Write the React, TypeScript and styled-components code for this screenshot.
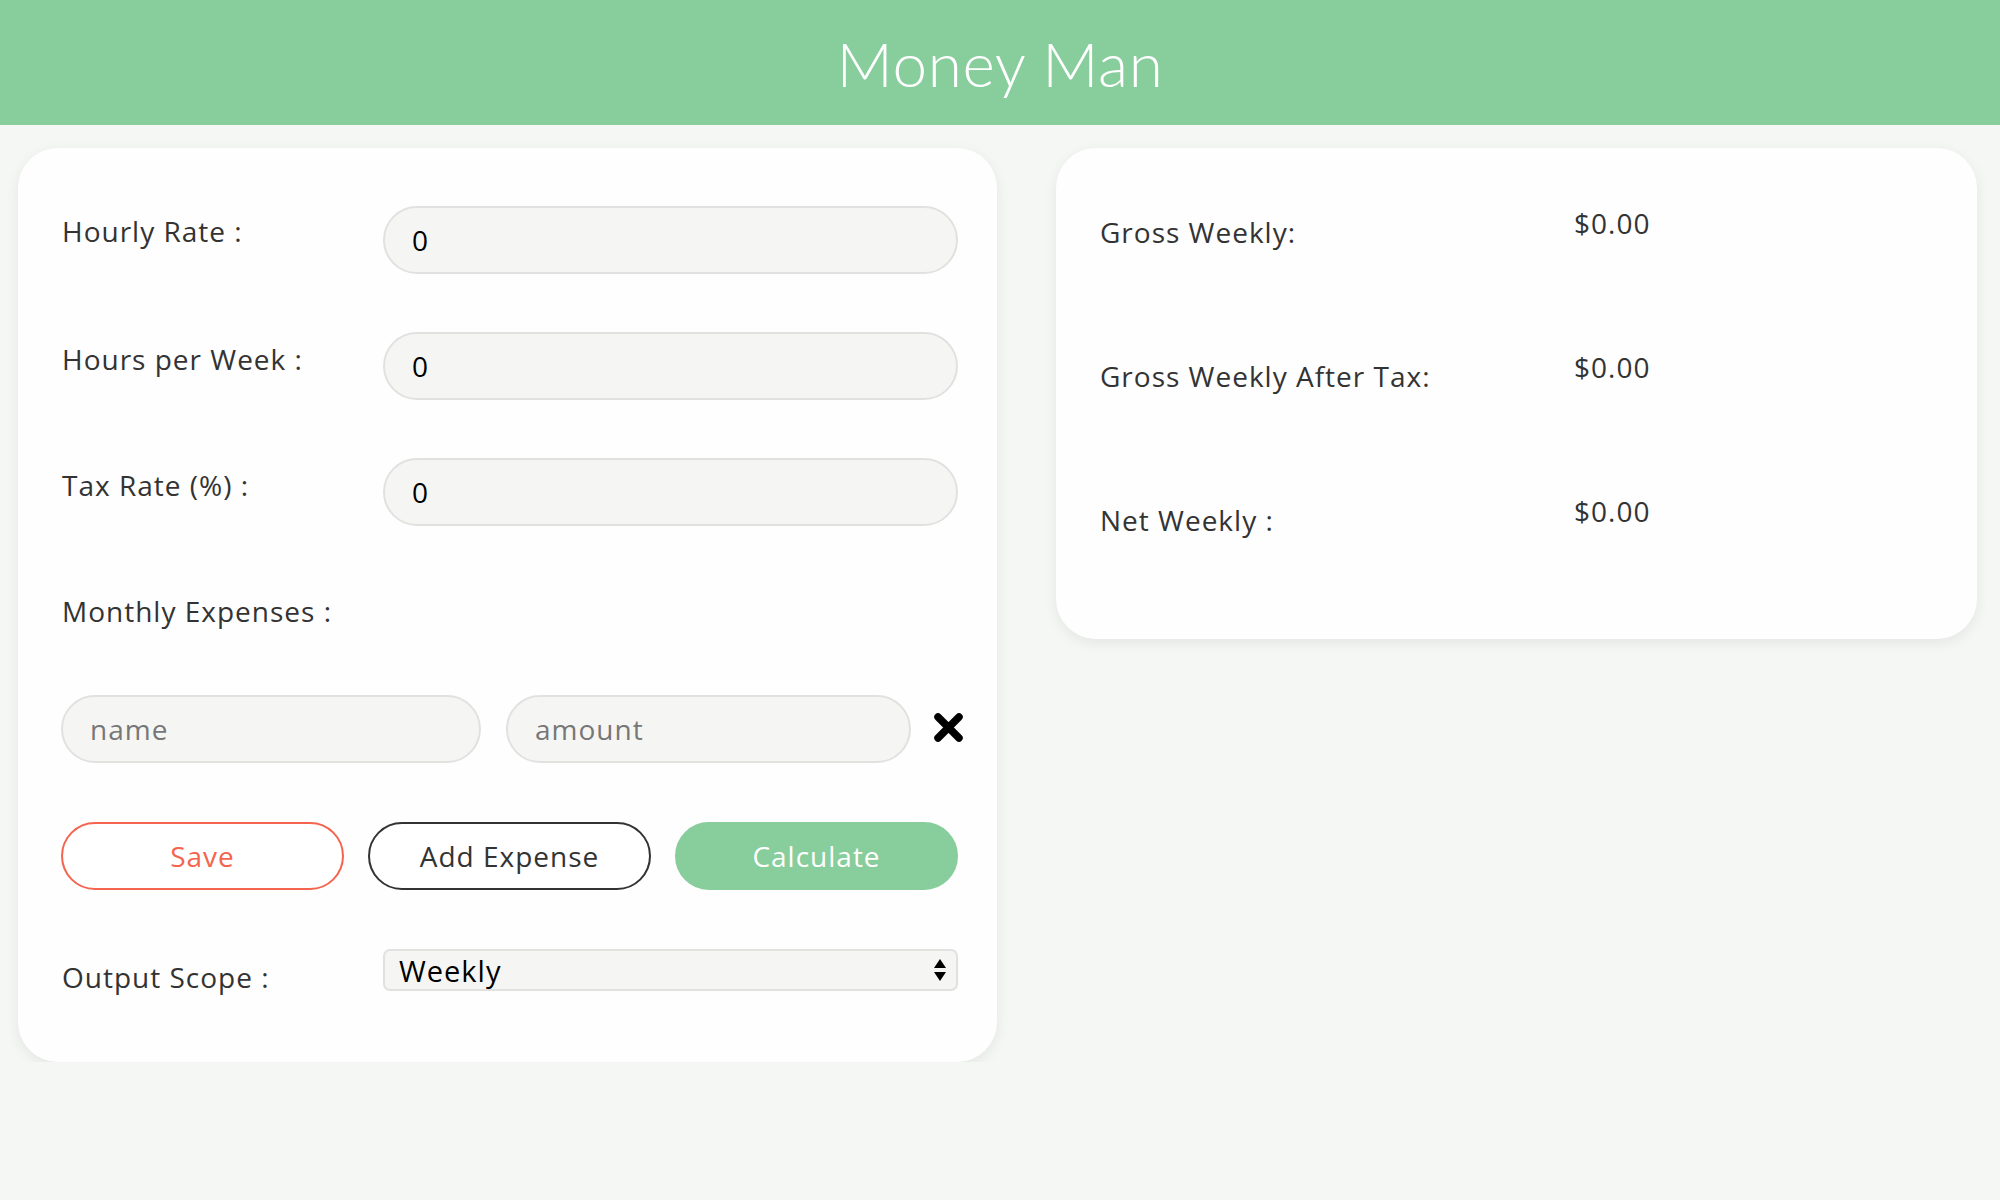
import React from "react";
import styled, { createGlobalStyle } from "styled-components";

const GlobalStyle = createGlobalStyle`
  html, body {
    margin: 0;
    padding: 0;
    background: #f5f7f4;
    font-family: "Open Sans", "Noto Sans", "Liberation Sans", sans-serif;
    color: #333333;
  }
  * { box-sizing: border-box; }
`;

const Header = styled.header`
  height: 125px;
  background: #88cd9c;
  display: flex;
  align-items: center;
  justify-content: center;
`;

const Title = styled.h1`
  margin: 0;
  color: #ffffff;
  font-family: "Lato", "Open Sans", sans-serif;
  font-weight: 300;
  font-size: 62px;
  letter-spacing: 0.6px;
  line-height: 1;
`;

const Main = styled.main`
  display: flex;
  align-items: flex-start;
  gap: 59px;
  padding: 23px 23px 0 18px;
`;

const Card = styled.section<{ $width: number }>`
  width: ${(p) => p.$width}px;
  background: #fefefe;
  border-radius: 40px;
  box-shadow: 0 4px 14px rgba(0, 0, 0, 0.07);
`;

const FormCard = styled(Card)`
  display: flex;
  flex-direction: column;
  padding: 58px 39px 68px 43px;
`;

const FieldRow = styled.div<{ $mt?: number }>`
  display: grid;
  grid-template-columns: 322px 1fr;
  align-items: start;
  margin-top: ${(p) => p.$mt ?? 0}px;
`;

const Label = styled.label<{ $pt?: number }>`
  font-size: 28px;
  font-weight: 400;
  letter-spacing: 1px;
  line-height: 34px;
  color: #333333;
  padding-left: 1px;
  padding-top: ${(p) => p.$pt ?? 0}px;
`;

const Pill = styled.input`
  height: 68px;
  width: 100%;
  border-radius: 34px;
  border: 2px solid #e1e2e0;
  background: #f5f6f4;
  padding: 0 27px;
  font-family: inherit;
  font-size: 28px;
  letter-spacing: 1px;
  color: #000000;
  outline: none;
  &::placeholder {
    color: #777777;
  }
`;

const SectionTitle = styled.div`
  font-size: 28px;
  letter-spacing: 1px;
  line-height: 34px;
  margin-top: 68px;
  padding-left: 1px;
`;

const ExpenseRow = styled.div`
  display: grid;
  grid-template-columns: 420px 405px 32px;
  column-gap: 25px;
  align-items: center;
  margin-top: 67px;
`;

const RemoveButton = styled.button`
  border: none;
  background: none;
  padding: 0;
  margin-left: -8px;
  margin-top: -4px;
  display: flex;
  align-items: center;
  justify-content: center;
  cursor: pointer;
`;

const ButtonRow = styled.div`
  display: grid;
  grid-template-columns: repeat(3, 1fr);
  column-gap: 24px;
  margin-top: 59px;
`;

const Button = styled.button<{ $variant: "save" | "outline" | "primary" }>`
  height: 68px;
  border-radius: 34px;
  font-family: inherit;
  font-size: 28px;
  letter-spacing: 1px;
  cursor: pointer;
  border: 2px solid
    ${(p) =>
      p.$variant === "save" ? "#f4644e" : p.$variant === "outline" ? "#333333" : "#88cd9c"};
  background: ${(p) => (p.$variant === "primary" ? "#88cd9c" : "#ffffff")};
  color: ${(p) =>
    p.$variant === "save" ? "#f4644e" : p.$variant === "outline" ? "#333333" : "#ffffff"};
`;

const SelectWrap = styled.div`
  position: relative;
  height: 42px;
`;

const Select = styled.select`
  appearance: none;
  -webkit-appearance: none;
  width: 100%;
  height: 42px;
  border: 2px solid #e1e2e0;
  border-radius: 7px;
  background: #f5f6f4;
  padding: 0 40px 0 14px;
  font-family: inherit;
  font-size: 29px;
  letter-spacing: 1px;
  color: #000000;
  outline: none;
`;

const Arrows = styled.svg`
  position: absolute;
  right: 12px;
  top: 10px;
  pointer-events: none;
`;

const ResultCard = styled(Card)`
  padding: 58px 40px 102px 43px;
  display: flex;
  flex-direction: column;
  gap: 101px;
`;

const ResultRow = styled.div`
  display: grid;
  grid-template-columns: 475px 1fr;
  align-items: start;
`;

const Value = styled.div`
  font-size: 28px;
  letter-spacing: 1px;
  line-height: 34px;
  color: #333333;
`;

const results = [
  { label: "Gross Weekly:", value: "$0.00" },
  { label: "Gross Weekly After Tax:", value: "$0.00" },
  { label: "Net Weekly :", value: "$0.00" },
];

export default function App() {
  return (
    <>
      <GlobalStyle />
      <Header>
        <Title>Money Man</Title>
      </Header>
      <Main>
        <FormCard $width={979}>
          <FieldRow>
            <Label $pt={8}>Hourly Rate :</Label>
            <Pill defaultValue="0" />
          </FieldRow>
          <FieldRow $mt={58}>
            <Label $pt={10}>Hours per Week :</Label>
            <Pill defaultValue="0" />
          </FieldRow>
          <FieldRow $mt={58}>
            <Label $pt={10}>Tax Rate (%) :</Label>
            <Pill defaultValue="0" />
          </FieldRow>
          <SectionTitle>Monthly Expenses :</SectionTitle>
          <ExpenseRow>
            <Pill placeholder="name" />
            <Pill placeholder="amount" />
            <RemoveButton aria-label="remove">
              <svg width="31" height="31" viewBox="0 0 31 31">
                <path
                  d="M5 5 L26 26 M26 5 L5 26"
                  stroke="#000"
                  strokeWidth="7.5"
                  strokeLinecap="round"
                  fill="none"
                />
              </svg>
            </RemoveButton>
          </ExpenseRow>
          <ButtonRow>
            <Button $variant="save">Save</Button>
            <Button $variant="outline">Add Expense</Button>
            <Button $variant="primary">Calculate</Button>
          </ButtonRow>
          <FieldRow $mt={59}>
            <Label $pt={11}>Output Scope :</Label>
            <SelectWrap>
              <Select defaultValue="weekly">
                <option value="weekly">Weekly</option>
                <option value="monthly">Monthly</option>
                <option value="yearly">Yearly</option>
              </Select>
              <Arrows width="12" height="22" viewBox="0 0 12 22">
                <path d="M6 0 L12 9 L0 9 Z" fill="#000" />
                <path d="M0 13 L12 13 L6 22 Z" fill="#000" />
              </Arrows>
            </SelectWrap>
          </FieldRow>
        </FormCard>
        <ResultCard $width={921}>
          {results.map((r) => (
            <ResultRow key={r.label}>
              <Label $pt={9}>{r.label}</Label>
              <Value>{r.value}</Value>
            </ResultRow>
          ))}
        </ResultCard>
      </Main>
    </>
  );
}
